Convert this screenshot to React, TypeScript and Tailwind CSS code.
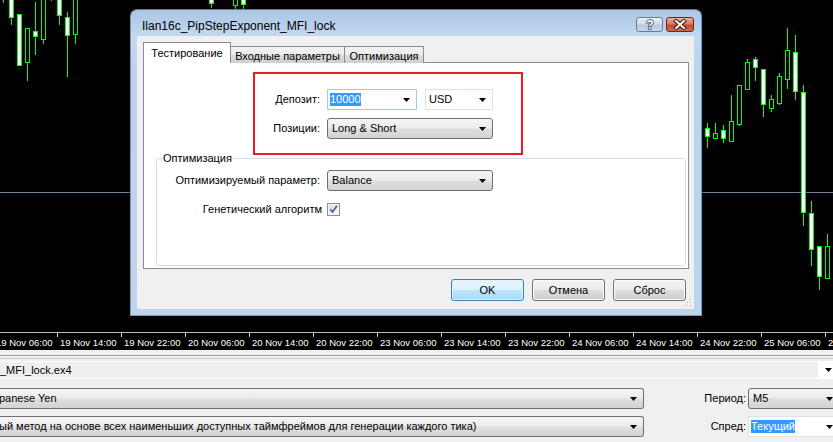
import React from "react";

type Candle = { x: number; bt: number; bb: number; wt: number; wb: number; up?: boolean };

// visible candles, y in px of the plot
const candles: Candle[] = [
  { x: 3, bt: -20, bb: -8, wt: -8, wb: 3, up: true },
  { x: 11, bt: -5, bb: 17, wt: -5, wb: 25 },
  { x: 19, bt: 14, bb: 65, wt: 14, wb: 65 },
  { x: 27, bt: 28, bb: 62, wt: 28, wb: 81, up: true },
  { x: 35, bt: 31, bb: 36, wt: 2, wb: 55 },
  { x: 43, bt: -5, bb: 39, wt: -5, wb: 44, up: true },
  { x: 51, bt: -20, bb: -6, wt: -6, wb: 1, up: true },
  { x: 59, bt: -5, bb: 15, wt: -5, wb: 25 },
  { x: 67, bt: 17, bb: 35, wt: 12, wb: 77 },
  { x: 75, bt: -5, bb: 34, wt: -5, wb: 44, up: true },
  { x: 211, bt: -5, bb: 3, wt: -5, wb: 8 },
  { x: 235, bt: -5, bb: 5, wt: -5, wb: 9, up: true },
  { x: 243, bt: -5, bb: 4, wt: -5, wb: 9 },
  { x: 707, bt: 128, bb: 136, wt: 123, wb: 148 },
  { x: 715, bt: 133, bb: 138, wt: 123, wb: 138, up: true },
  { x: 723, bt: 130, bb: 138, wt: 125, wb: 143 },
  { x: 731, bt: 121, bb: 141, wt: 95, wb: 141, up: true },
  { x: 739, bt: 85, bb: 124, wt: 85, wb: 126, up: true },
  { x: 747, bt: 62, bb: 89, wt: 59, wb: 89, up: true },
  { x: 755, bt: 59, bb: 67, wt: 57, wb: 81 },
  { x: 763, bt: 69, bb: 104, wt: 69, wb: 117 },
  { x: 771, bt: 99, bb: 108, wt: 95, wb: 112, up: true },
  { x: 779, bt: 76, bb: 103, wt: 73, wb: 105, up: true },
  { x: 787, bt: 50, bb: 79, wt: 28, wb: 89, up: true },
  { x: 795, bt: 52, bb: 91, wt: 35, wb: 100 },
  { x: 803, bt: 92, bb: 212, wt: 85, wb: 226 },
  { x: 811, bt: 213, bb: 249, wt: 201, wb: 266 },
  { x: 819, bt: 246, bb: 276, wt: 246, wb: 290 },
  { x: 827, bt: 246, bb: 278, wt: 234, wb: 279, up: true },
];

const timeLabels = [
  "19 Nov 06:00", "19 Nov 14:00", "19 Nov 22:00", "20 Nov 06:00", "20 Nov 14:00",
  "20 Nov 22:00", "23 Nov 06:00", "23 Nov 14:00", "23 Nov 22:00", "24 Nov 06:00",
  "24 Nov 14:00", "24 Nov 22:00", "25 Nov 06:00", "25 Nov 14:00",
];

function Arrow() {
  return (
    <svg width="7" height="4" viewBox="0 0 7 4" className="shrink-0">
      <path d="M0 0h7L3.5 4z" fill="#000" />
    </svg>
  );
}

// readonly win7 combobox (button look); caller gives width, padding and corners
function ButtonCombo({ text, className = "" }: { text: string; className?: string }) {
  return (
    <div
      className={`h-[21px] flex items-center justify-between border-y border-r border-[#707070] rounded-r-[3px] bg-[linear-gradient(#f4f4f4,#ececec_48%,#dfdfdf_52%,#d3d3d3)] pr-[6px] ${className}`}
    >
      <span className="whitespace-nowrap">{text}</span>
      <Arrow />
    </div>
  );
}

function Chart() {
  return (
    <svg width="833" height="332" className="block" shapeRendering="crispEdges">
      <line x1="0" y1="192.5" x2="833" y2="192.5" stroke="#6f8193" />
      {candles.map((c) => (
        <g key={c.x}>
          <line x1={c.x + 0.5} x2={c.x + 0.5} y1={c.wt} y2={c.wb} stroke="#00ff00" />
          <rect
            x={c.x - 1.5}
            y={c.bt + 0.5}
            width="4"
            height={c.bb - c.bt}
            fill={c.up ? "#000" : "#fff"}
            stroke="#00ff00"
          />
        </g>
      ))}
    </svg>
  );
}

function Dialog() {
  return (
    <div className="absolute left-[130px] top-[9px] w-[572px] h-[307px] flex flex-col rounded-t-[7px] border border-[#4fa6d0] border-t-[#6b7888] border-l-[#7d93ab] bg-[linear-gradient(#aac5e4,#c3d8ef_26px,#bcd3ec_60px,#bed4ed)] shadow-[0_0_4px_rgba(0,0,0,0.35)]">
      {/* title bar */}
      <div className="h-[26px] flex items-start pl-[11px] pr-[7px] shrink-0">
        <div className="pt-[9px] text-[12px] leading-[14px] text-black">Ilan16c_PipStepExponent_MFI_lock</div>
        <div className="ml-auto mt-[7px] flex gap-[3px]">
          <div className="w-[27px] h-[15px] rounded-[3px] border border-[#6c7c90] bg-[linear-gradient(#e8eff8,#cfdcec_45%,#b6c9e0_55%,#c6d7ec)] flex items-center justify-center">
            <svg width="12" height="13" viewBox="0 0 12 13">
              <text
                x="6"
                y="11"
                textAnchor="middle"
                fontSize="12"
                fontWeight="bold"
                fontFamily="Liberation Sans, Arial, sans-serif"
                fill="#fff"
                stroke="#3c4858"
                strokeWidth="1.6"
                paintOrder="stroke"
              >
                ?
              </text>
            </svg>
          </div>
          <div className="w-[28px] h-[15px] rounded-[3px] border border-[#6b2519] bg-[linear-gradient(#eab0a2,#d77a64_45%,#c44a30_55%,#d2704f)] flex items-center justify-center">
            <svg width="14" height="11" viewBox="0 0 14 11">
              <path d="M3 2l8 7M11 2l-8 7" stroke="#40170f" strokeWidth="4" strokeLinecap="square" />
              <path d="M3 2l8 7M11 2l-8 7" stroke="#fff" strokeWidth="2" strokeLinecap="square" />
            </svg>
          </div>
        </div>
      </div>

      {/* client area */}
      <div className="relative ml-[6px] mr-[7px] h-[273px] bg-[#f0f0f0] flex flex-col text-[11px] text-black">
        <div className="flex items-end h-[20px] mt-[7px] ml-[6px] relative z-10">
          <div className="w-[88px] h-[21px] border border-b-0 border-[#898c95] bg-white flex justify-center pt-[2px]">
            Тестирование
          </div>
          <div className="w-[115px] h-[17px] -ml-px border border-b-0 border-[#898c95] bg-[linear-gradient(#f3f3f3,#ebebeb_50%,#dddddd_50%,#cfcfcf)] flex justify-center pt-[1px]">
            Входные параметры
          </div>
          <div className="w-[80px] h-[17px] -ml-px border border-b-0 border-[#898c95] bg-[linear-gradient(#f3f3f3,#ebebeb_50%,#dddddd_50%,#cfcfcf)] flex justify-center pt-[1px]">
            Оптимизация
          </div>
        </div>

        <div className="-mt-px ml-[6px] mr-[5px] h-[207px] border border-[#898c95] bg-white flex flex-col">
          <div className="ml-[109px] mt-[9px] w-[270px] h-[83px] border-2 border-[#ec1c24] pt-[15px] flex flex-col gap-[8px]">
            <div className="flex items-center gap-[7px]">
              <div className="w-[65px] text-right">Депозит:</div>
              <div className="w-[90px] h-[21px] border border-[#a7c6e5] bg-white flex items-center justify-between pl-[2px] pr-[6px]">
                <span className="bg-[#3399ff] text-white leading-[13px]">10000</span>
                <Arrow />
              </div>
              <div className="ml-px w-[68px] h-[21px] border border-[#dde2e8] bg-white flex items-center justify-between pl-[3px] pr-[6px]">
                <span>USD</span>
                <Arrow />
              </div>
            </div>
            <div className="flex items-center gap-[7px]">
              <div className="w-[65px] text-right">Позиции:</div>
              <ButtonCombo text="Long & Short" className="w-[166px] border-l rounded-l-[3px] pl-[4px]" />
            </div>
          </div>

          <fieldset className="-mt-[3px] ml-[12px] mr-[2px] h-[114px] border border-[#d5dfe5] rounded-[3px]">
            <legend className="ml-[5px] px-[1px] leading-[13px]">Оптимизация</legend>
            <div className="mt-[5px] flex items-center gap-[7px]">
              <div className="w-[163px] text-right">Оптимизируемый параметр:</div>
              <ButtonCombo text="Balance" className="w-[166px] border-l rounded-l-[3px] pl-[4px]" />
            </div>
            <div className="mt-[12px] flex items-center h-[13px]">
              <div className="w-[165px] text-right whitespace-nowrap">Генетический алгоритм</div>
              <svg width="13" height="13" viewBox="0 0 13 13" className="ml-[5px]">
                <defs>
                  <linearGradient id="cb" x1="0" y1="0" x2="1" y2="1">
                    <stop offset="0" stopColor="#dcdcdc" />
                    <stop offset="1" stopColor="#fbfbfb" />
                  </linearGradient>
                </defs>
                <rect x="0.5" y="0.5" width="12" height="12" fill="#f4f4f4" stroke="#8e8f8f" />
                <rect x="2" y="2" width="9" height="9" fill="url(#cb)" />
                <path d="M3.2 6.3l2.3 2.6L10 2.8" fill="none" stroke="#4b5f8e" strokeWidth="1.7" />
              </svg>
            </div>
          </fieldset>
        </div>

        <div className="mt-[10px] flex justify-end gap-[8px] pr-[8px]">
          <div className="w-[73px] h-[22px] rounded-[3px] border border-[#3c7fb1] bg-[linear-gradient(#eaf6fd,#d9f0fc_50%,#bee6fd_50%,#a7d9f5)] shadow-[inset_0_0_0_1px_#dff2fc] flex items-center justify-center">
            OK
          </div>
          <div className="w-[73px] h-[22px] rounded-[3px] border border-[#707070] bg-[linear-gradient(#f2f2f2,#ebebeb_50%,#dddddd_50%,#cfcfcf)] shadow-[inset_0_0_0_1px_#fcfcfc] flex items-center justify-center">
            Отмена
          </div>
          <div className="w-[73px] h-[22px] rounded-[3px] border border-[#707070] bg-[linear-gradient(#f2f2f2,#ebebeb_50%,#dddddd_50%,#cfcfcf)] shadow-[inset_0_0_0_1px_#fcfcfc] flex items-center justify-center">
            Сброс
          </div>
        </div>

        <svg width="9" height="9" viewBox="0 0 9 9" className="absolute right-[2px] bottom-[2px]">
          {[
            [7, 1], [7, 4], [4, 4], [7, 7], [4, 7], [1, 7],
          ].map(([x, y]) => (
            <rect key={`${x}-${y}`} x={x} y={y} width="1" height="1" fill="#b0b0b0" />
          ))}
        </svg>
      </div>
    </div>
  );
}

export default function App() {
  return (
    <div className="w-[833px] h-[442px] overflow-hidden flex flex-col font-['Liberation_Sans',Arial,sans-serif] text-black bg-[#f0f0f0]">
      <div className="relative h-[350px] bg-black shrink-0 overflow-hidden">
        <Chart />
        <div className="h-[18px] border-t border-[#bdbdbd] flex -ml-[7px] text-white text-[9.5px] leading-[11px]">
          {timeLabels.map((t) => (
            <div key={t} className="w-[64px] shrink-0 flex items-start">
              <div className="w-px h-[4px] bg-[#d0d0d0]" />
              <div className="ml-[2px] mt-[4px] whitespace-nowrap">{t}</div>
            </div>
          ))}
        </div>
        <Dialog />
      </div>

      <div className="flex-1 flex flex-col text-[11px]">
        <div className="mt-[5px] h-px bg-[#a0a0a0]" />
        <div className="mt-[2px] h-px bg-[#cfcfcf]" />
        <div className="mt-[2px] flex h-[18px]">
          <div className="flex-1 bg-[#efefef] border-y border-white flex items-center">
            <span>_MFI_lock.ex4</span>
          </div>
          <div className="w-[15px] bg-white flex items-center justify-end pr-px">
            <Arrow />
          </div>
        </div>
        <div className="mt-[9px] flex items-center h-[21px]">
          <ButtonCombo text="panese Yen" className="w-[645px] shrink-0 -ml-px" />
          <div className="w-[104px] shrink-0 text-right pr-[2px]">Период:</div>
          <ButtonCombo text="M5" className="w-[92px] shrink-0 border-l rounded-l-[3px] pl-[4px]" />
        </div>
        <div className="mt-[7px] flex items-center h-[21px]">
          <ButtonCombo
            text="ый метод на основе всех наименьших доступных таймфреймов для генерации каждого тика)"
            className="w-[645px] shrink-0 -ml-px"
          />
          <div className="w-[104px] shrink-0 text-right pr-[2px]">Спред:</div>
          <div className="w-[92px] shrink-0 h-[21px] border border-[#dde2e8] bg-white flex items-center justify-between pl-[2px] pr-[6px]">
            <span className="bg-[#3399ff] text-white leading-[13px]">Текущий</span>
            <Arrow />
          </div>
        </div>
      </div>
    </div>
  );
}
